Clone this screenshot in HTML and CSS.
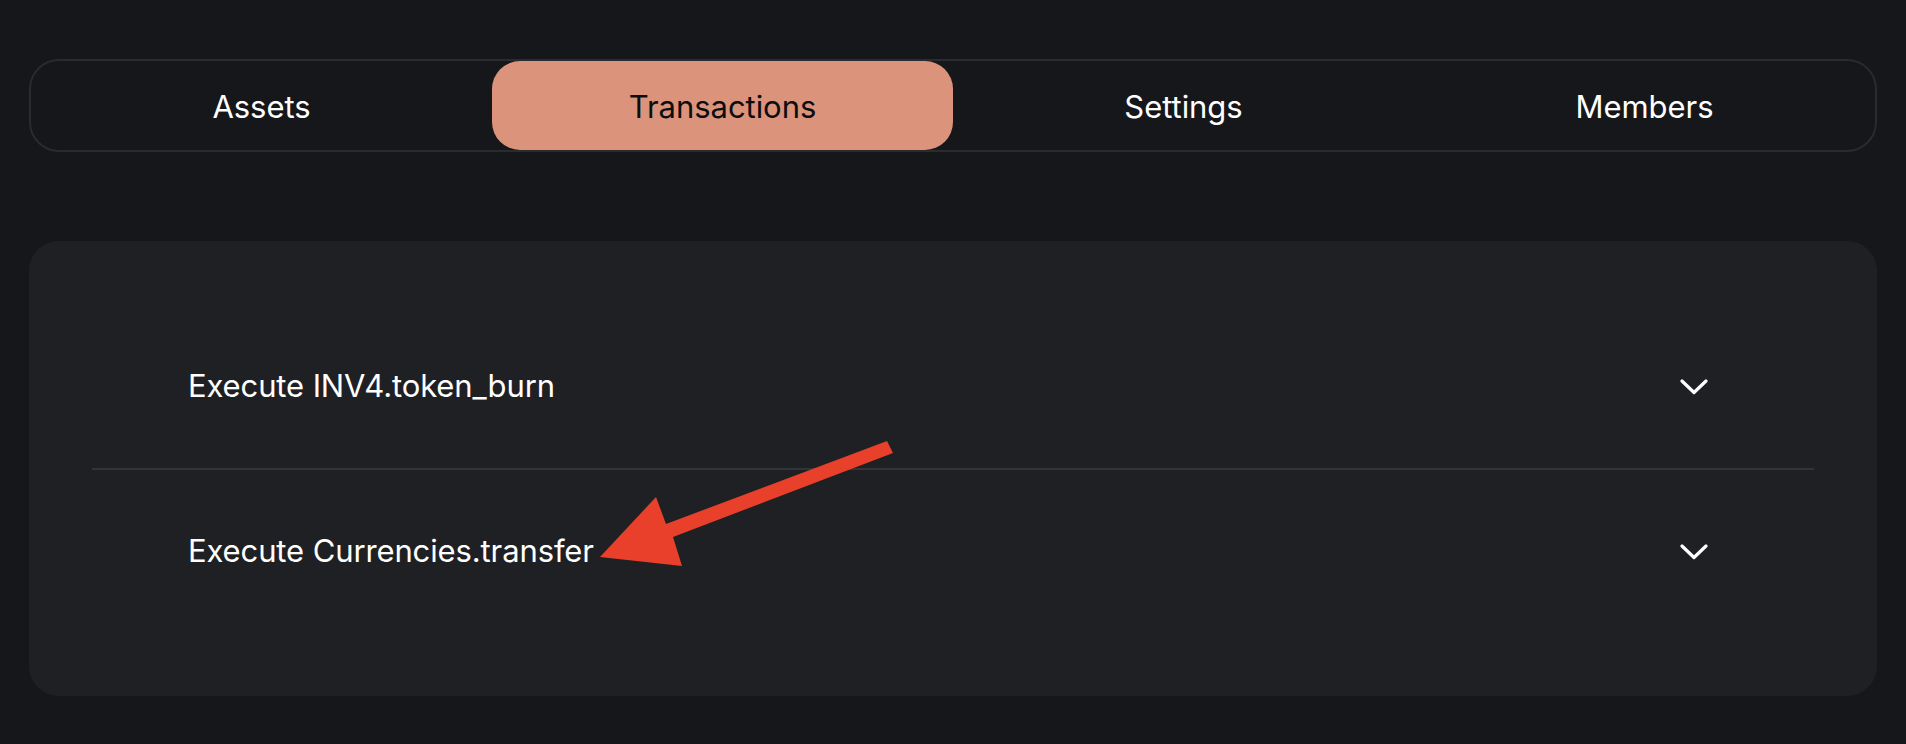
FILE: index.html
```html
<!DOCTYPE html>
<html lang="en">
<head>
<meta charset="utf-8">
<title>Transactions</title>
<link rel="stylesheet" href="styles.css">
</head>
<body>
<div class="page">
  <nav class="tabs">
    <div class="tab">Assets</div>
    <div class="tab active">Transactions</div>
    <div class="tab">Settings</div>
    <div class="tab">Members</div>
  </nav>
  <section class="card">
    <div class="row">
      <span class="label">Execute INV4.token_burn</span>
      <svg class="chev" width="28" height="16" viewBox="0 0 28 16"><polyline points="2,2 14,13.5 26,2" fill="none" stroke="#fff" stroke-width="3.2" stroke-linecap="round" stroke-linejoin="round"/></svg>
    </div>
    <div class="divider"></div>
    <div class="row">
      <span class="label">Execute Currencies.transfer</span>
      <svg class="chev" width="28" height="16" viewBox="0 0 28 16"><polyline points="2,2 14,13.5 26,2" fill="none" stroke="#fff" stroke-width="3.2" stroke-linecap="round" stroke-linejoin="round"/></svg>
    </div>
  </section>
</div>
<svg class="annot" width="1906" height="744" viewBox="0 0 1906 744">
  <polygon points="887,441 893,453 673,537 682,566 600,557 656,497 666,524" fill="#e8402a"/>
</svg>
</body>
</html>
```

FILE: styles.css
```css
html, body {
  margin: 0;
  padding: 0;
  background: #16171b;
}
body {
  width: 1906px;
  height: 744px;
  overflow: hidden;
  position: relative;
  font-family: Inter, "Noto Sans", "Liberation Sans", sans-serif;
  color: #fff;
}
.page {
  padding: 59px 29px 0 29px;
  display: flex;
  flex-direction: column;
  gap: 89px;
}
.tabs {
  height: 93px;
  box-sizing: border-box;
  border: 2px solid #2a2b2f;
  border-radius: 30px;
  display: grid;
  grid-template-columns: repeat(4, 1fr);
  align-items: stretch;
}
.tab {
  display: flex;
  align-items: center;
  justify-content: center;
  font-size: 31px;
  letter-spacing: -0.05px;
  color: #fff;
  border-radius: 28px;
  padding-top: 2px;
}
.tab.active {
  background: #db937b;
  color: #0d0d0f;
}
.card {
  background: #1f2024;
  border-radius: 30px;
  padding: 64px 63px 63px 63px;
  display: flex;
  flex-direction: column;
}
.row {
  height: 163px;
  display: flex;
  align-items: center;
  justify-content: space-between;
  padding: 0 106px 0 96px;
}
.label {
  font-size: 31px;
  letter-spacing: -0.12px;
  color: #fff;
  margin-top: -3px;
}
.chev {
  display: block;
}
.divider {
  height: 2px;
  background: #333438;
}
.annot {
  position: absolute;
  left: 0;
  top: 0;
  pointer-events: none;
}
```
